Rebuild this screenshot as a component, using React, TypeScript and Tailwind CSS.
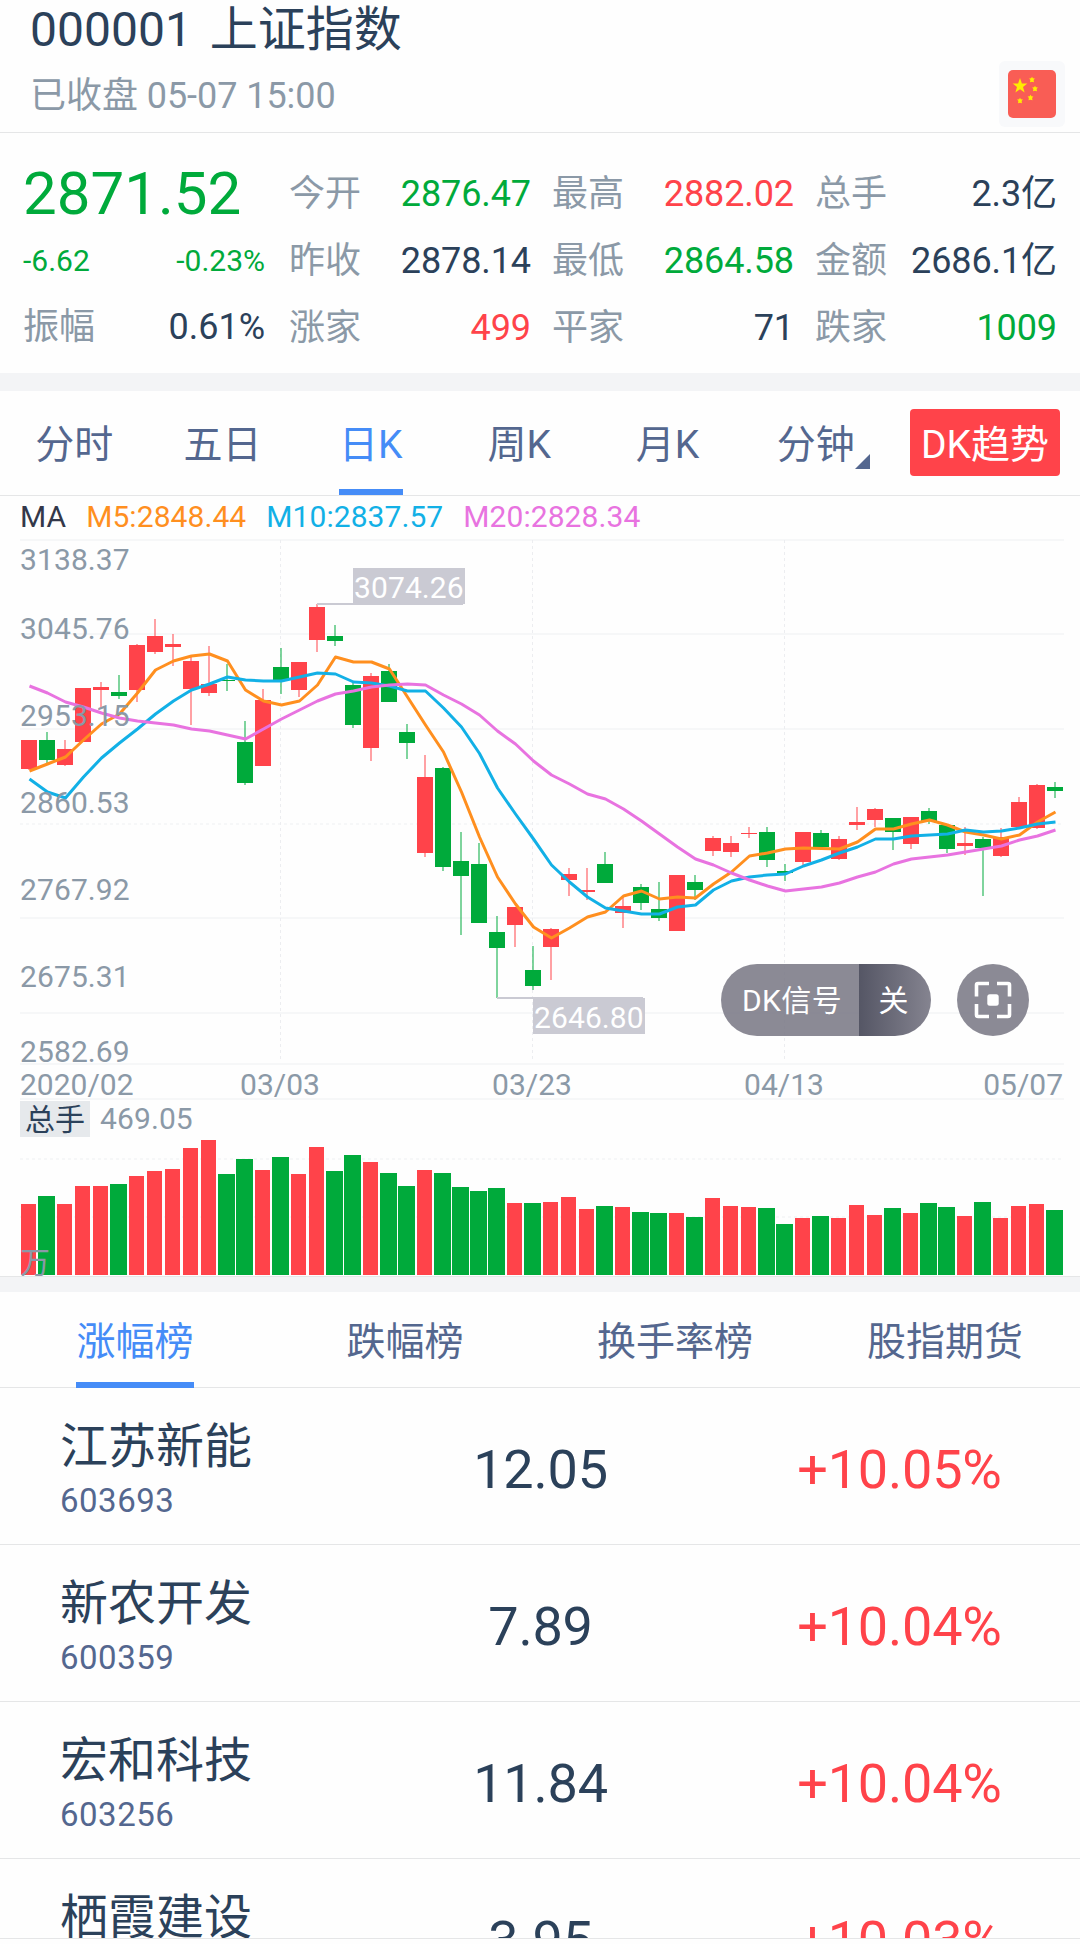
import React, { useState } from 'react';
import { clsx } from 'clsx';

type Candle = [up: 0 | 1, top: number, bottom: number, high: number, low: number, volumeTop: number];

const STEP = 18;
const RED = '#ff434a';
const GREEN = '#00aa3b';

// up, body top, body bottom, wick top, wick bottom, volume bar top
const candles: Candle[] = [
  [1, 740, 769, 740, 770, 1204], [0, 740, 760, 732, 763, 1196], [1, 749, 765, 740, 766, 1204],
  [1, 688, 742, 688, 742, 1186], [1, 687, 690, 682, 707, 1186], [0, 692, 696, 675, 699, 1184],
  [1, 645, 690, 644, 702, 1176], [1, 636, 652, 619, 654, 1171], [1, 644, 647, 634, 666, 1169],
  [1, 661, 689, 657, 725, 1148], [1, 684, 693, 646, 696, 1140], [0, 680, 681, 664, 691, 1174],
  [0, 742, 783, 721, 785, 1159], [1, 700, 766, 689, 766, 1170], [0, 667, 680, 648, 694, 1157],
  [1, 662, 690, 662, 697, 1174], [1, 607, 640, 604, 652, 1147], [0, 636, 641, 625, 646, 1171],
  [0, 685, 725, 683, 728, 1155], [1, 676, 748, 673, 761, 1162], [0, 671, 702, 664, 702, 1173],
  [0, 732, 743, 724, 759, 1186], [1, 777, 853, 755, 857, 1170], [0, 768, 867, 767, 871, 1173],
  [0, 861, 876, 832, 935, 1187], [0, 864, 923, 843, 923, 1191], [0, 932, 948, 916, 998, 1188],
  [1, 907, 925, 907, 947, 1203], [0, 970, 986, 946, 990, 1203], [1, 929, 947, 928, 980, 1202],
  [1, 874, 880, 868, 896, 1197], [1, 890, 892, 868, 900, 1209], [0, 864, 883, 852, 883, 1206],
  [1, 906, 913, 897, 928, 1207], [0, 887, 903, 884, 910, 1212], [0, 909, 918, 882, 921, 1213],
  [1, 875, 931, 875, 931, 1213], [0, 882, 890, 875, 900, 1217], [1, 838, 851, 836, 856, 1198],
  [1, 843, 852, 836, 857, 1206], [1, 833, 834, 827, 838, 1207], [0, 832, 860, 827, 867, 1208],
  [0, 871, 873, 864, 881, 1224], [1, 832, 862, 832, 865, 1218], [0, 833, 847, 830, 847, 1216],
  [1, 839, 859, 836, 860, 1218], [1, 822, 825, 807, 830, 1205], [1, 809, 820, 808, 827, 1215],
  [0, 818, 832, 818, 850, 1208], [1, 817, 844, 817, 849, 1213], [0, 811, 821, 808, 824, 1203],
  [0, 825, 849, 825, 853, 1207], [1, 843, 846, 827, 855, 1216], [0, 839, 848, 837, 896, 1202],
  [1, 837, 856, 828, 857, 1218], [1, 802, 827, 797, 827, 1206], [1, 785, 828, 784, 829, 1204],
  [0, 787, 791, 782, 798, 1210],
];

const averages = [
  {
    label: 'M5:2848.44',
    textClass: 'text-[#ff8f1f]',
    color: '#ff8f1f',
    values: [
      771, 764, 757, 740, 724, 714, 693, 670, 661, 656, 654, 661, 690, 701, 705, 701, 685, 657, 662, 662,
      669, 697, 725, 752, 792, 837, 877, 904, 927, 938, 928, 917, 912, 896, 891, 899, 897, 898, 884, 872,
      856, 853, 849, 848, 848.5, 849, 842, 829, 829, 824, 820, 825, 832, 835, 839, 835, 822, 812,
    ],
  },
  {
    label: 'M10:2837.57',
    textClass: 'text-[#12b0e6]',
    color: '#12b0e6',
    values: [
      779, 792, 798, 777, 758, 743, 729, 714, 701, 690, 684, 677, 680, 681, 681, 677, 673, 674, 682, 683,
      686, 691, 691, 708, 727, 753.5, 788, 814, 839, 865, 882, 897, 908, 911, 914, 914, 907, 905, 890, 881,
      877, 875, 874, 866, 860, 853, 847, 839, 839, 836, 835, 834, 830, 832, 831, 828, 824, 822,
    ],
  },
  {
    label: 'M20:2828.34',
    textClass: 'text-[#e873e0]',
    color: '#e873e0',
    values: [
      686, 693, 702, 707, 713, 718, 721, 723, 725, 729, 731, 735, 739, 729, 719, 710, 701, 694, 691, 687,
      685, 684, 685, 695, 704, 715, 731, 744, 761, 775, 784, 794, 799, 809, 821, 834, 847, 859, 865, 873,
      880, 886, 891, 889, 887, 883, 877, 872, 864, 859, 857, 855, 852, 849, 846, 840, 836, 830,
    ],
  },
];

const priceAxis = [
  { label: '3138.37', y: 570 },
  { label: '3045.76', y: 639 },
  { label: '2953.15', y: 726 },
  { label: '2860.53', y: 813 },
  { label: '2767.92', y: 900 },
  { label: '2675.31', y: 987 },
  { label: '2582.69', y: 1062 },
];

const stats = [
  [
    { label: '今开', value: '2876.47', color: 'text-[#00aa3b]' },
    { label: '昨收', value: '2878.14', color: 'text-[#2b415a]' },
    { label: '涨家', value: '499', color: 'text-[#ff434a]' },
  ],
  [
    { label: '最高', value: '2882.02', color: 'text-[#ff434a]' },
    { label: '最低', value: '2864.58', color: 'text-[#00aa3b]' },
    { label: '平家', value: '71', color: 'text-[#2b415a]' },
  ],
  [
    { label: '总手', value: '2.3亿', color: 'text-[#2b415a]' },
    { label: '金额', value: '2686.1亿', color: 'text-[#2b415a]' },
    { label: '跌家', value: '1009', color: 'text-[#00aa3b]' },
  ],
];

const periods = ['分时', '五日', '日K', '周K', '月K', '分钟'];
const rankTabs = ['涨幅榜', '跌幅榜', '换手率榜', '股指期货'];

type Stock = { name: string; code?: string; price: string; change: string };

const stocks: Stock[] = [
  { name: '江苏新能', code: '603693', price: '12.05', change: '+10.05%' },
  { name: '新农开发', code: '600359', price: '7.89', change: '+10.04%' },
  { name: '宏和科技', code: '603256', price: '11.84', change: '+10.04%' },
  { name: '栖霞建设', price: '3.95', change: '+10.03%' },
];

const FlagIcon = () => (
  <svg viewBox="0 0 48 48" className="h-12 w-12">
    <rect width="48" height="48" rx="5" fill="#f95d55" />
    <g fill="#ffec00">
      <path d="M12 8 L13.9 13.4 L19.3 13.5 L15 16.9 L16.6 22.4 L12 19.2 L7.4 22.4 L9 16.9 L4.7 13.5 L10.1 13.4 Z" />
      {[[24, 9.5], [27, 18.5], [22.5, 27.5], [12, 30.5]].map(([x, y]) => (
        <path key={x + y} transform={`translate(${x} ${y})`} d="M0 -2.8 L.9 -1.2 L2.9 -1 L1.6 .6 L2 2.8 L0 2.2 L-2 2.8 L-1.6 .6 L-2.9 -1 L-.9 -1.2 Z" />
      ))}
    </g>
  </svg>
);

const Header = () => (
  <header className="flex h-[133px] items-start justify-between border-b border-[#e5e6e7] pr-[15px] pl-[30px]">
    <div>
      <h1 className="flex gap-[18px] text-[48px] leading-[60px] text-[#2b415a]">
        <span>000001</span>
        <span>上证指数</span>
      </h1>
      <p className="mt-3 text-4xl leading-[48px] tracking-[-0.05px] text-[#8b99a7]">已收盘 05-07 15:00</p>
    </div>
    <div className="mt-[61px] flex h-[66px] w-[66px] items-center justify-center rounded-md bg-[#f8f9fb]">
      <FlagIcon />
    </div>
  </header>
);

const Quote = () => (
  <section className="flex h-60 pt-7 pl-[23px] text-4xl leading-[67px]">
    <div className="mr-6 w-[242px]">
      <div className="-mt-px h-[67px] text-[60px] text-[#00aa3b]">2871.52</div>
      <div className="flex h-[67px] justify-between text-[30px] leading-[67px] text-[#00aa3b]">
        <span>-6.62</span>
        <span>-0.23%</span>
      </div>
      <div className="flex justify-between">
        <span className="text-[#8b99a7]">振幅</span>
        <span className="text-[#2b415a]">0.61%</span>
      </div>
    </div>
    <div className="flex gap-[22px]">
      {stats.map((column) => (
        <div key={column[0].label} className="w-[241px]">
          {column.map((item) => (
            <div key={item.label} className="flex justify-between whitespace-nowrap">
              <span className="text-[#8b99a7]">{item.label}</span>
              <span className={clsx('-mr-px tracking-[-0.1px]', item.color)}>{item.value}</span>
            </div>
          ))}
        </div>
      ))}
    </div>
  </section>
);

const PeriodTabs = () => {
  const [active, setActive] = useState('日K');

  return (
    <nav className="flex h-[105px] border-b border-[#e5e6e7] text-[39px]">
      <div className="flex w-[890px]">
        {periods.map((period) => (
          <button
            key={period}
            onClick={() => setActive(period)}
            className={clsx('flex flex-1 justify-center', period === active ? 'text-[#458cf7]' : 'text-[#54678f]')}
          >
            <span className="relative h-[104px] leading-[109px]">
              {period}
              {period === active && <span className="absolute bottom-0 left-0 h-1.5 w-full bg-[#458cf7]" />}
              {period === '分钟' && (
                <svg viewBox="0 0 15 15" className="absolute top-[63px] left-full h-[15px] w-[15px]">
                  <path d="M15 0 V15 H0 Z" fill="#54678f" />
                </svg>
              )}
            </span>
          </button>
        ))}
      </div>
      <button className="mt-[18px] ml-5 h-[67px] w-[150px] rounded-sm bg-[#ff434a] leading-[73px] text-white">DK趋势</button>
    </nav>
  );
};

const PriceChart = () => (
  <svg viewBox="0 538 1080 563" className="block h-[563px] w-full text-[30px]" shapeRendering="crispEdges">
    <g stroke="#f6f7f8" strokeWidth="2">
      {[540, 634, 729, 918, 1013, 1064, 1099].map((y) => (
        <line key={y} x1="20" x2="1064" y1={y} y2={y} />
      ))}
      <line x1="20" x2="1064" y1="824" y2="824" strokeDasharray="3 3" />
    </g>
    <g stroke="#ecedf0" strokeWidth="1" strokeDasharray="3 3">
      {[280.5, 532.5, 784.5].map((x) => (
        <line key={x} x1={x} x2={x} y1="540" y2="1062" />
      ))}
    </g>

    {candles.map(([up, top, bottom, high, low], i) => {
      const color = up ? RED : GREEN;
      return (
        <g key={i} fill={color}>
          <rect x={28 + i * STEP} y={high} width="2" height={low - high} opacity="0.5" />
          <rect x={21 + i * STEP} y={top} width="16" height={bottom - top} />
        </g>
      );
    })}

    <g fill="none" strokeWidth="3" strokeLinejoin="round" shapeRendering="auto">
      {averages.map((line) => (
        <polyline
          key={line.label}
          stroke={line.color}
          points={line.values.map((y, i) => `${29.5 + i * STEP},${y}`).join(' ')}
        />
      ))}
    </g>

    <g fill="#8b99a7" shapeRendering="auto">
      {priceAxis.map((tick) => (
        <text key={tick.label} x="20" y={tick.y} letterSpacing="0.1">{tick.label}</text>
      ))}
      <text x="20" y="1095">2020/02</text>
      <text x="280" y="1095" textAnchor="middle">03/03</text>
      <text x="532" y="1095" textAnchor="middle">03/23</text>
      <text x="784" y="1095" textAnchor="middle">04/13</text>
      <text x="1063" y="1095" textAnchor="end">05/07</text>
    </g>

    {/* period high and low */}
    <g fill="#cacad3">
      <rect x="317" y="603" width="146" height="2" />
      <rect x="353" y="568" width="112" height="36" />
      <rect x="497" y="997" width="146" height="2" />
      <rect x="533" y="998" width="112" height="36" />
    </g>
    <g fill="#fff">
      <text x="354" y="598" letterSpacing="0.1">3074.26</text>
      <text x="534" y="1028" letterSpacing="0.1">2646.80</text>
    </g>
  </svg>
);

const SignalControls = () => (
  <div className="absolute top-[468px] left-[721px] flex gap-[26px]">
    <button className="flex h-[72px] w-[210px] overflow-hidden rounded-full text-[30px] leading-[73px] text-white">
      <span className="w-[138px] bg-[#7b7a86]/88 pl-1 text-center tracking-[0.4px]">DK信号</span>
      <span className="w-[72px] bg-linear-to-r from-[#555665] to-[#858490] pr-[3px] text-center">关</span>
    </button>
    <button className="flex h-[72px] w-[72px] items-center justify-center rounded-full bg-[#7b7a86]/88">
      <svg viewBox="0 0 38 38" className="h-[38px] w-[38px]" fill="none" stroke="#fff" strokeWidth="3.6">
        <path d="M2.5 15.5 V4 Q2.5 2.5 4 2.5 H15" />
        <path d="M23 2.5 H34 Q35.5 2.5 35.5 4 V15.5" />
        <path d="M35.5 23 V34 Q35.5 35.5 34 35.5 H23" />
        <path d="M15 35.5 H4 Q2.5 35.5 2.5 34 V23" />
        <rect x="13.3" y="13.3" width="11.4" height="11.4" rx="2.5" fill="#fff" stroke="none" />
      </svg>
    </button>
  </div>
);

const VolumeChart = () => (
  <div>
    <div className="flex h-9 gap-[10px] pl-5 text-[30px] leading-9">
      <span className="w-[70px] bg-[#e6e9ec] pl-[5px] leading-[37px] text-[#2b415a]">总手</span>
      <span className="tracking-[0.1px] text-[#8b99a7]">469.05</span>
    </div>
    <svg viewBox="0 1137 1080 139" className="block h-[139px] w-full" shapeRendering="crispEdges">
      <g stroke="#f6f7f8" strokeWidth="2" strokeDasharray="3 3">
        <line x1="20" x2="1064" y1="1159" y2="1159" />
        <line x1="20" x2="1064" y1="1217" y2="1217" />
      </g>
      {candles.map(([up, , , , , y], i) => (
        <rect key={i} x={(up ? 21 : 20) + i * STEP} y={y} width={up ? 15 : 17} height={1275 - y} fill={up ? RED : GREEN} />
      ))}
      <text x="20" y="1273" fill="#8b99a7" className="text-[30px]">万</text>
    </svg>
  </div>
);

const RankTabs = () => {
  const [active, setActive] = useState('涨幅榜');

  return (
    <nav className="grid h-24 grid-cols-4 border-b border-[#e5e6e7] text-[39px]">
      {rankTabs.map((tab) => (
        <button
          key={tab}
          onClick={() => setActive(tab)}
          className={clsx('flex justify-center', tab === active ? 'text-[#458cf7]' : 'text-[#54678f]')}
        >
          <span className="relative h-24 leading-[101px]">
            {tab}
            {tab === active && <span className="absolute bottom-0 left-0 h-1.5 w-full bg-[#458cf7]" />}
          </span>
        </button>
      ))}
    </nav>
  );
};

const StockRow: React.FC<{ stock: Stock }> = ({ stock }) => (
  <li className="grid h-[157px] grid-cols-3 border-b border-[#e5e6e7]">
    <div className="pt-[29px] pl-[60px]">
      <div className="text-[48px] leading-[60px] text-[#2b415a]">{stock.name}</div>
      {stock.code && <div className="mt-1 text-[33px] leading-10 tracking-[0.5px] text-[#54678f]">{stock.code}</div>}
    </div>
    <div className="pl-px text-center text-[54px] leading-[163px] tracking-[-0.2px] text-[#2b415a]">{stock.price}</div>
    <div className="pr-px text-center text-[54px] leading-[163px] tracking-[-0.2px] text-[#ff434a]">{stock.change}</div>
  </li>
);

export default function App() {
  return (
    <div className="h-[1944px] w-[1080px] overflow-hidden bg-[#fefefe] font-['Roboto','Noto_Sans_CJK_SC',sans-serif]">
      <Header />
      <Quote />
      <div className="h-[18px] bg-[#f3f4f6]" />
      <PeriodTabs />
      <section className="relative">
        <div className="flex h-[42px] gap-5 pl-5 text-[30px] leading-[42px] tracking-[0.07px]">
          <span className="text-[#33384a]">MA</span>
          {averages.map((line) => (
            <span key={line.label} className={line.textClass}>{line.label}</span>
          ))}
        </div>
        <PriceChart />
        <SignalControls />
        <VolumeChart />
      </section>
      <div className="h-4 border-t border-[#e5e6e7] bg-[#f3f4f6]" />
      <RankTabs />
      <ul className="h-[551px] overflow-hidden border-b border-[#e5e6e7]">
        {stocks.map((stock) => (
          <StockRow key={stock.name} stock={stock} />
        ))}
      </ul>
    </div>
  );
}
